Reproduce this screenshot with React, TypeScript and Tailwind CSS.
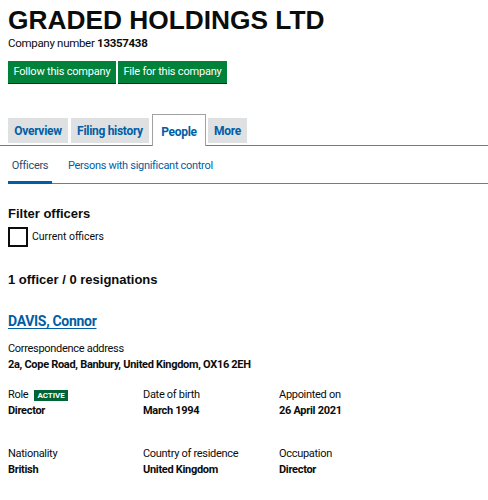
import React from "react";

const body = "font-['Roboto','Liberation_Sans',sans-serif]";
const head = "font-['Liberation_Sans',Arial,sans-serif]";

function Field({ label, value, badge }: { label: string; value: string; badge?: boolean }) {
  return (
    <div className="flex flex-col">
      <div className="flex h-[16px] items-center gap-[6px] text-[11px] tracking-[-0.3px] text-[#0b0c0c]">
        <span>{label}</span>
        {badge && (
          <span className="bg-[#006435] px-[3px] text-[8px] font-bold leading-[11px] tracking-[0px] text-white">
            ACTIVE
          </span>
        )}
      </div>
      <div className="text-[11px] font-bold leading-[16px] tracking-[-0.3px] text-[#0b0c0c]">{value}</div>
    </div>
  );
}

export default function App() {
  return (
    <div className={`h-[500px] w-[488px] overflow-hidden bg-white ${body}`}>
      <div className="pl-[8px] pt-[5px]">
        <h1 className={`text-[26.3px] font-bold leading-[30px] text-[#0b0c0c] ${head}`}>
          GRADED HOLDINGS LTD
        </h1>
        <p className="mt-0 text-[11.5px] leading-[16px] tracking-[-0.3px] text-[#0b0c0c]">
          Company number <span className="font-bold">13357438</span>
        </p>

        <div className="mt-[10px] flex gap-[2px]">
          <button className="flex h-[22px] w-[108px] items-center justify-center whitespace-nowrap bg-[#00823b] text-[11px] tracking-[-0.2px] text-white shadow-[0_1px_0_#003618]">
            Follow this company
          </button>
          <button className="flex h-[22px] w-[109px] items-center justify-center whitespace-nowrap bg-[#00823b] text-[11px] tracking-[-0.2px] text-white shadow-[0_1px_0_#003618]">
            File for this company
          </button>
        </div>
      </div>

      {/* main tabs */}
      <div className="mt-[31px] flex items-end border-b border-[#7a7a7a] pl-[8px]">
        <div className="mb-[2px] flex h-[25px] w-[60px] items-center justify-center bg-[#dee0e2] text-[12px] font-bold tracking-[-0.3px] text-[#005ea5]">
          Overview
        </div>
        <div className="mb-[2px] ml-[3px] flex h-[25px] w-[78px] items-center justify-center bg-[#dee0e2] text-[12px] font-bold tracking-[-0.3px] text-[#005ea5]">
          Filing history
        </div>
        <div className="-mb-[1px] ml-[3px] flex h-[32px] w-[54px] items-center justify-center border border-b-0 border-[#a1a1a1] bg-white pt-[2px] text-[12px] font-bold tracking-[-0.3px] text-[#005ea5]">
          People
        </div>
        <div className="mb-[2px] ml-[2px] flex h-[25px] w-[39px] items-center justify-center bg-[#dee0e2] text-[12px] font-bold tracking-[-0.3px] text-[#005ea5]">
          More
        </div>
      </div>

      {/* sub tabs */}
      <div className="ml-[8px] flex h-[38px] items-stretch border-b border-[#7a7a7a]">
        <div className="-mb-[1px] flex w-[44px] items-center justify-center border-b-[3px] border-[#005ea5] pt-[6px] text-[11px] tracking-[-0.3px] text-[#2b4c6b]">
          Officers
        </div>
        <div className="ml-[16px] flex items-center pt-[4px] text-[11px] tracking-[-0.3px] text-[#005ea5]">
          Persons with significant control
        </div>
      </div>

      <div className="pl-[8px]">
        <h2 className={`mt-[22px] text-[13px] font-bold leading-[16px] text-[#0b0c0c] ${head}`}>
          Filter officers
        </h2>
        <label className="mt-[5px] flex items-center gap-[4px]">
          <span className="h-[20px] w-[20px] border-2 border-[#0b0c0c] bg-white" />
          <span className="text-[10.5px] text-[#0b0c0c]">Current officers</span>
        </label>

        <h2 className={`mt-[25px] text-[13px] font-bold leading-[16px] text-[#0b0c0c] ${head}`}>
          1 officer / 0 resignations
        </h2>

        <a className="mt-[23px] block text-[14px] font-bold leading-[20px] tracking-[-0.3px] text-[#005ea5] underline decoration-1 underline-offset-[2px]">
          DAVIS, Connor
        </a>

        <div className="mt-[10px] text-[11px] leading-[16px] tracking-[-0.3px] text-[#0b0c0c]">Correspondence address</div>
        <div className="text-[11px] font-bold leading-[16px] tracking-[-0.3px] text-[#0b0c0c]">
          2a, Cope Road, Banbury, United Kingdom, OX16 2EH
        </div>

        <div className="mt-[14px] grid grid-cols-[135px_136px_1fr]">
          <Field label="Role" value="Director" badge />
          <Field label="Date of birth" value="March 1994" />
          <Field label="Appointed on" value="26 April 2021" />
        </div>

        <div className="mt-[27px] grid grid-cols-[135px_136px_1fr]">
          <Field label="Nationality" value="British" />
          <Field label="Country of residence" value="United Kingdom" />
          <Field label="Occupation" value="Director" />
        </div>
      </div>
    </div>
  );
}
